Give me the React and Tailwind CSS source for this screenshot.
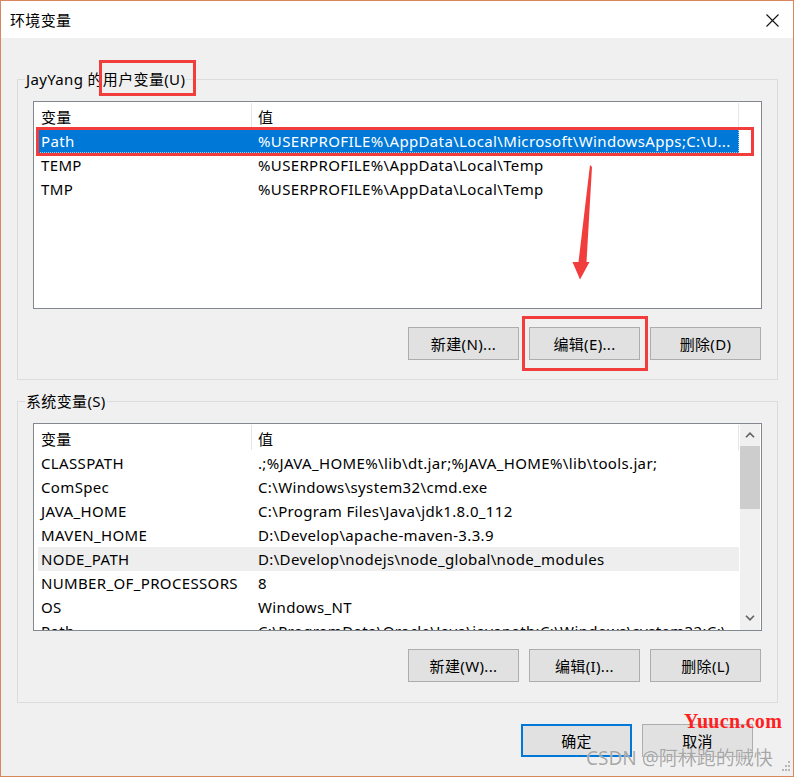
import React from "react";

const userRows = [
  ["Path", "%USERPROFILE%\\AppData\\Local\\Microsoft\\WindowsApps;C:\\U...", "sel"],
  ["TEMP", "%USERPROFILE%\\AppData\\Local\\Temp"],
  ["TMP", "%USERPROFILE%\\AppData\\Local\\Temp"],
];

const sysRows = [
  ["CLASSPATH", ".;%JAVA_HOME%\\lib\\dt.jar;%JAVA_HOME%\\lib\\tools.jar;"],
  ["ComSpec", "C:\\Windows\\system32\\cmd.exe"],
  ["JAVA_HOME", "C:\\Program Files\\Java\\jdk1.8.0_112"],
  ["MAVEN_HOME", "D:\\Develop\\apache-maven-3.3.9"],
  ["NODE_PATH", "D:\\Develop\\nodejs\\node_global\\node_modules", "hover"],
  ["NUMBER_OF_PROCESSORS", "8"],
  ["OS", "Windows_NT"],
  ["Path", "C:\\ProgramData\\Oracle\\Java\\javapath;C:\\Windows\\system32;C:\\"],
];

function Row({ name, value, state }) {
  const cls =
    state === "sel"
      ? "bg-[#0078d7] text-white outline-1 outline-dotted outline-offset-[-1px] outline-[#9fcdf3]"
      : state === "hover"
      ? "bg-[#eeeeee] text-black"
      : "text-black";
  return (
    <div className={"ml-[4px] w-[701px] h-[24px] shrink-0 flex items-center " + cls}>
      <div className="w-[213px] shrink-0 pl-[3px] whitespace-nowrap overflow-hidden">{name}</div>
      <div className="flex-1 pl-[7px] whitespace-nowrap overflow-hidden">{value}</div>
    </div>
  );
}

function Chevron({ up }) {
  return (
    <svg width="10" height="6" viewBox="0 0 10 6">
      <polyline
        points={up ? "1,5.2 5,1.2 9,5.2" : "1,0.8 5,4.8 9,0.8"}
        fill="none"
        stroke="#606060"
        strokeWidth="1.6"
      />
    </svg>
  );
}

function Scrollbar() {
  return (
    <div className="w-[20px] shrink-0 h-full bg-[#f0f0f0] flex flex-col mr-px">
      <div className="h-[22px] shrink-0 flex items-center justify-center">
        <Chevron up />
      </div>
      <div className="h-[63px] shrink-0 bg-[#cdcdcd]" />
      <div className="flex-1" />
      <div className="h-[24px] shrink-0 flex items-center justify-center">
        <Chevron />
      </div>
    </div>
  );
}

function VarList({ rows, scroll }) {
  return (
    <div className="w-[729px] h-[208px] border border-[#828790] bg-white flex overflow-hidden">
      <div className="w-[706px] shrink-0 flex flex-col overflow-hidden">
        <div className="h-[27px] shrink-0 flex pl-[4px] text-black">
          <div className="w-[213px] shrink-0 pl-[3px] pt-[2px] flex items-center">变量</div>
          <div className="w-px h-[25px] mt-px bg-[#e5e5e5]" />
          <div className="w-[486px] shrink-0 pl-[6px] pt-[2px] flex items-center">值</div>
          <div className="w-px h-[25px] mt-px bg-[#e5e5e5]" />
        </div>
        {rows.map((r, i) => (
          <Row key={i} name={r[0]} value={r[1]} state={r[2]} />
        ))}
      </div>
      {scroll && <Scrollbar />}
    </div>
  );
}

function Btn({ children, primary }) {
  return (
    <div
      className={
        "w-[111px] h-[33px] flex items-center justify-center bg-[#e1e1e1] text-black " +
        (primary ? "border-2 border-[#0078d7]" : "border border-[#adadad]")
      }
    >
      {children}
    </div>
  );
}

export default function App() {
  return (
    <div className="relative w-[794px] h-[777px] font-['Noto_Sans','Noto_Sans_CJK_SC',sans-serif] text-[15px] leading-[20px] tracking-[0.35px] text-black overflow-hidden">
      <div className="w-full h-full border border-[#d9875e] flex flex-col bg-[#f0f0f0]">
        {/* Title bar */}
        <div className="h-[37px] shrink-0 bg-white flex items-center justify-between pl-[9px] pr-[14px]">
          <span className="pt-[1px]">环境变量</span>
          <svg width="13" height="13" viewBox="0 0 13 13" className="mt-[1px]">
            <path d="M0.5 0.5 L12.5 12.5 M12.5 0.5 L0.5 12.5" stroke="#111" strokeWidth="1.1" fill="none" />
          </svg>
        </div>

        {/* User vars group */}
        <fieldset className="ml-[16px] mt-[31px] w-[761px] border border-[#dcdcdc] pb-[19px]">
          <legend className="ml-[7px] px-px leading-[20px]">JayYang 的用户变量(U)</legend>
          <div className="px-[15px]">
            <div className="mt-[12px]">
              <VarList rows={userRows} />
            </div>
            <div className="mt-[18px] flex justify-end gap-[10px] pr-px">
              <Btn>新建(N)...</Btn>
              <Btn>编辑(E)...</Btn>
              <Btn>删除(D)</Btn>
            </div>
          </div>
        </fieldset>

        {/* System vars group */}
        <fieldset className="ml-[16px] mt-[11px] w-[761px] border border-[#dcdcdc] pb-[20px]">
          <legend className="ml-[7px] px-px leading-[20px]">系统变量(S)</legend>
          <div className="px-[15px]">
            <div className="mt-[12px]">
              <VarList rows={sysRows} scroll />
            </div>
            <div className="mt-[18px] flex justify-end gap-[10px] pr-px">
              <Btn>新建(W)...</Btn>
              <Btn>编辑(I)...</Btn>
              <Btn>删除(L)</Btn>
            </div>
          </div>
        </fieldset>

        {/* OK / Cancel */}
        <div className="mt-[21px] flex justify-end gap-[10px] pr-[40px]">
          <Btn primary>确定</Btn>
          <Btn>取消</Btn>
        </div>
      </div>

      {/* Red annotation boxes */}
      <div className="absolute left-[99px] top-[60px] w-[97px] h-[36px] border-[3px] border-[#f23d3d]" />
      <div className="absolute left-[36px] top-[127px] w-[718px] h-[29px] border-[3px] border-[#f23d3d]" />
      <div className="absolute left-[522px] top-[316px] w-[126px] h-[55px] border-[3px] border-[#f23d3d]" />

      {/* Red arrow */}
      <svg className="absolute left-[570px] top-[162px]" width="26" height="120" viewBox="570 162 26 120">
        <polygon points="590,165 592,167 586.5,262 589.5,262 580,279.5 572.5,262 578.5,262" fill="#f23d3d" />
      </svg>

      {/* Watermarks */}
      <div className="absolute left-[684px] top-[709px] font-['Liberation_Serif',serif] font-bold text-[20px] leading-[24px] text-[#ff1f1f] tracking-[0.3px]">
        Yuucn.com
      </div>
      <div className="absolute left-[586px] top-[745px] text-[19px] leading-[26px] tracking-normal text-[#8a8a8a]/75 [text-shadow:0_0_1px_#ffffff]">
        CSDN @阿林跑的贼快
      </div>

      {/* resize grip */}
      <svg className="absolute left-[782px] top-[761px]" width="10" height="12" viewBox="0 0 10 12">
        <rect x="6" y="0" width="2" height="2" fill="#b8b8b8" />
        <rect x="3" y="4" width="2" height="2" fill="#b8b8b8" />
        <rect x="6" y="4" width="2" height="2" fill="#b8b8b8" />
        <rect x="0" y="8" width="2" height="2" fill="#b8b8b8" />
        <rect x="3" y="8" width="2" height="2" fill="#b8b8b8" />
        <rect x="6" y="8" width="2" height="2" fill="#b8b8b8" />
      </svg>
    </div>
  );
}
